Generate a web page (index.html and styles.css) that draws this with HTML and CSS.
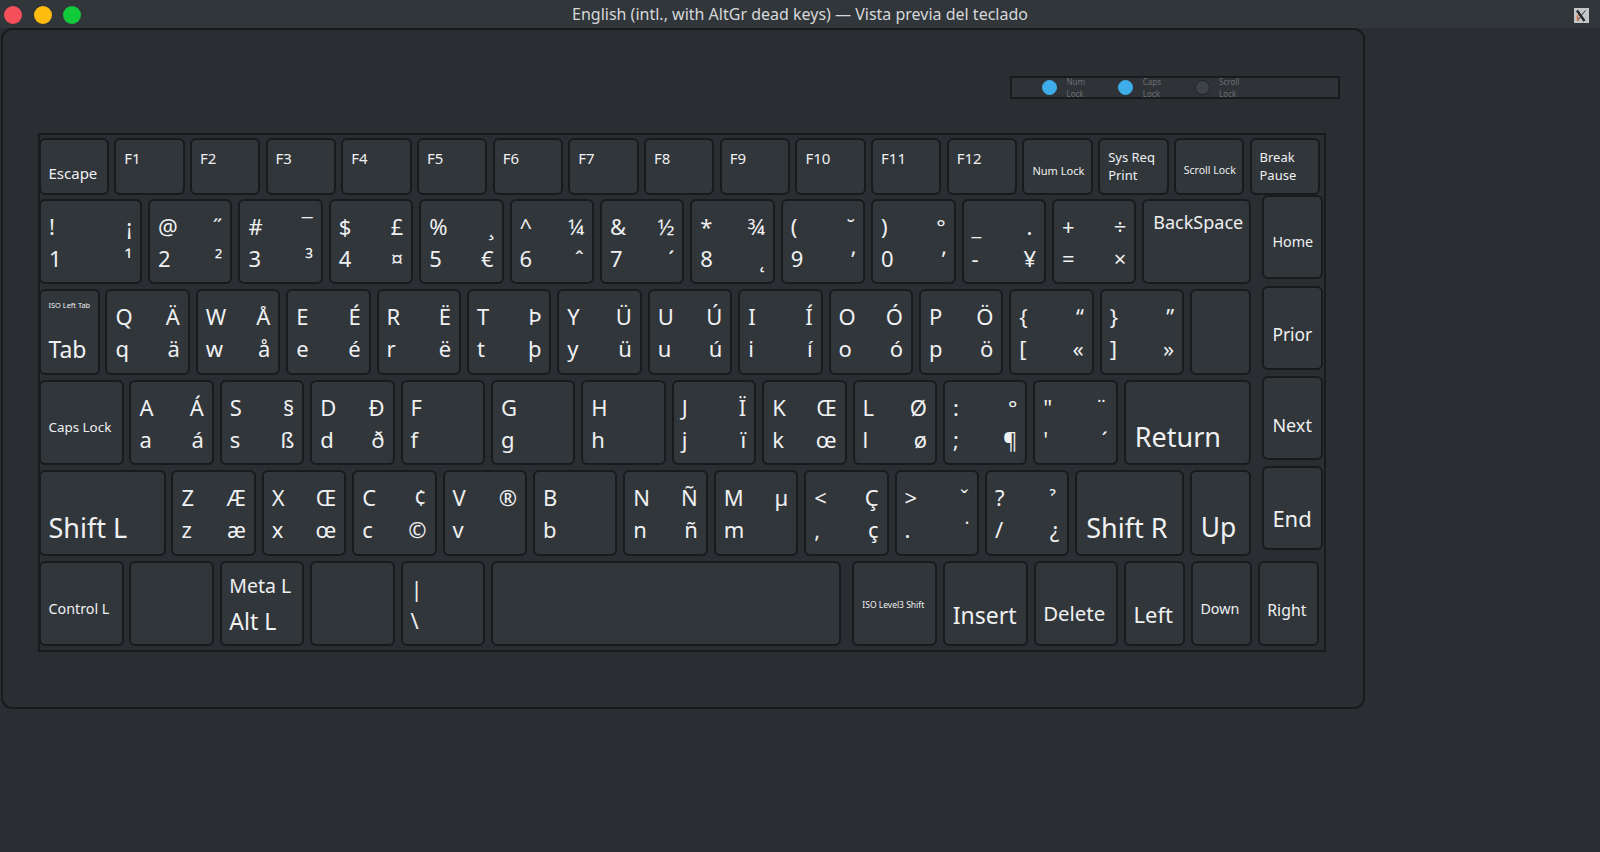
FILE: index.html
```html
<!DOCTYPE html>
<html lang="es">
<head>
<meta charset="utf-8">
<title>Vista previa del teclado</title>
<link rel="stylesheet" href="styles.css">
</head>
<body>
<header class="titlebar">
  <div class="lights"><span class="light red"></span><span class="light yellow"></span><span class="light green"></span></div>
  <div class="title">English (intl., with AltGr dead keys) — Vista previa del teclado</div>
  <svg class="xicon" viewBox="0 0 15 15" width="15" height="15" aria-hidden="true">
    <rect width="15" height="15" fill="#c3c7c8"/>
    <path d="M3 2.5 C5 5 7.500 9 10.500 13" fill="none" stroke="#26292b" stroke-width="2.600"/>
    <path d="M11.500 2.500 C9 5 6 9 3.500 12.500" fill="none" stroke="#26292b" stroke-width="1"/>
    <path d="M4.500 7 C2.500 9 2.500 11.500 5 12.500" fill="none" stroke="#e0703a" stroke-width="1.400"/>
  </svg>
</header>

<main class="frame">
  <section class="leds">
    <div class="led-item"><span class="led on"></span><span class="led-label">Num<br>Lock</span></div>
    <div class="led-item"><span class="led on"></span><span class="led-label">Caps<br>Lock</span></div>
    <div class="led-item"><span class="led"></span><span class="led-label">Scroll<br>Lock</span></div>
  </section>

  <section class="keyboard">
    <div class="keyboard-inner">
      <div class="row fn-row">
        <div class="key fn low-fn f15">Escape</div>
        <div class="key fn f15">F1</div>
        <div class="key fn f15">F2</div>
        <div class="key fn f15">F3</div>
        <div class="key fn f15">F4</div>
        <div class="key fn f15">F5</div>
        <div class="key fn f15">F6</div>
        <div class="key fn f15">F7</div>
        <div class="key fn f15">F8</div>
        <div class="key fn f15">F9</div>
        <div class="key fn f15">F10</div>
        <div class="key fn f15">F11</div>
        <div class="key fn f15">F12</div>
        <div class="key fn low-fn f11">Num Lock</div>
        <div class="key fn f13">Sys Req<br>Print</div>
        <div class="key fn low-fn f10">Scroll Lock</div>
        <div class="key fn f13">Break<br>Pause</div>
      </div>

      <div class="middle">
        <div class="rows">
          <div class="row">
            <div class="key legend w103"><span>!</span><span>¡</span><span>1</span><span>¹</span></div>
            <div class="key legend"><span>@</span><span>˝</span><span>2</span><span>²</span></div>
            <div class="key legend"><span>#</span><span>¯</span><span>3</span><span>³</span></div>
            <div class="key legend"><span>$</span><span>£</span><span>4</span><span>¤</span></div>
            <div class="key legend"><span>%</span><span>¸</span><span>5</span><span>€</span></div>
            <div class="key legend"><span>^</span><span>¼</span><span>6</span><span>ˆ</span></div>
            <div class="key legend"><span>&amp;</span><span>½</span><span>7</span><span>ˊ</span></div>
            <div class="key legend"><span>*</span><span>¾</span><span>8</span><span>˛</span></div>
            <div class="key legend"><span>(</span><span>˘</span><span>9</span><span>ʹ</span></div>
            <div class="key legend"><span>)</span><span>°</span><span>0</span><span>ʹ</span></div>
            <div class="key legend"><span>_</span><span>.&thinsp;</span><span>-</span><span>¥</span></div>
            <div class="key legend"><span>+</span><span>÷</span><span>=</span><span>×</span></div>
            <div class="key label w108 backspace f18">BackSpace</div>
          </div>

          <div class="row">
            <div class="key label w60 tabkey"><span class="iso-tab">ISO Left Tab</span><span class="tab-word">Tab</span></div>
            <div class="key legend"><span>Q</span><span>Ä</span><span>q</span><span>ä</span></div>
            <div class="key legend"><span>W</span><span>Å</span><span>w</span><span>å</span></div>
            <div class="key legend"><span>E</span><span>É</span><span>e</span><span>é</span></div>
            <div class="key legend"><span>R</span><span>Ë</span><span>r</span><span>ë</span></div>
            <div class="key legend"><span>T</span><span>Þ</span><span>t</span><span>þ</span></div>
            <div class="key legend"><span>Y</span><span>Ü</span><span>y</span><span>ü</span></div>
            <div class="key legend"><span>U</span><span>Ú</span><span>u</span><span>ú</span></div>
            <div class="key legend"><span>I</span><span>Í</span><span>i</span><span>í</span></div>
            <div class="key legend"><span>O</span><span>Ó</span><span>o</span><span>ó</span></div>
            <div class="key legend"><span>P</span><span>Ö</span><span>p</span><span>ö</span></div>
            <div class="key legend"><span>{</span><span>“</span><span>[</span><span>«</span></div>
            <div class="key legend"><span>}</span><span>”</span><span>]</span><span>»</span></div>
            <div class="key w61"></div>
          </div>

          <div class="row">
            <div class="key label low f13b">Caps Lock</div>
            <div class="key legend"><span>A</span><span>Á</span><span>a</span><span>á</span></div>
            <div class="key legend"><span>S</span><span>§</span><span>s</span><span>ß</span></div>
            <div class="key legend"><span>D</span><span>Ð</span><span>d</span><span>ð</span></div>
            <div class="key legend"><span>F</span><span></span><span>f</span><span></span></div>
            <div class="key legend"><span>G</span><span></span><span>g</span><span></span></div>
            <div class="key legend"><span>H</span><span></span><span>h</span><span></span></div>
            <div class="key legend"><span>J</span><span>Ï</span><span>j</span><span>ï</span></div>
            <div class="key legend"><span>K</span><span>Œ</span><span>k</span><span>œ</span></div>
            <div class="key legend"><span>L</span><span>Ø</span><span>l</span><span>ø</span></div>
            <div class="key legend"><span>:</span><span>°</span><span>;</span><span>¶</span></div>
            <div class="key legend"><span>"</span><span>¨</span><span>'</span><span>´</span></div>
            <div class="key label low wide-pad w127 f27">Return</div>
          </div>

          <div class="row">
            <div class="key label low w126 f27">Shift L</div>
            <div class="key legend"><span>Z</span><span>Æ</span><span>z</span><span>æ</span></div>
            <div class="key legend"><span>X</span><span>Œ</span><span>x</span><span>œ</span></div>
            <div class="key legend"><span>C</span><span>¢</span><span>c</span><span>©</span></div>
            <div class="key legend"><span>V</span><span>®</span><span>v</span><span></span></div>
            <div class="key legend"><span>B</span><span></span><span>b</span><span></span></div>
            <div class="key legend"><span>N</span><span>Ñ</span><span>n</span><span>ñ</span></div>
            <div class="key legend"><span>M</span><span>µ</span><span>m</span><span></span></div>
            <div class="key legend"><span>&lt;</span><span>Ç</span><span>,</span><span>ç</span></div>
            <div class="key legend"><span>&gt;</span><span>ˇ</span><span>.</span><span>˙</span></div>
            <div class="key legend"><span>?</span><span>ˀ&thinsp;</span><span>/</span><span>¿</span></div>
            <div class="key label low wide-pad w108 f27">Shift R</div>
            <div class="key label low wide-pad w61 f26">Up</div>
          </div>
        </div>

        <div class="nav-col">
          <div class="key nav f14">Home</div>
          <div class="key nav f17">Prior</div>
          <div class="key nav f18">Next</div>
          <div class="key nav f22">End</div>
        </div>
      </div>

      <div class="row">
        <div class="key label low f14">Control L</div>
        <div class="key"></div>
        <div class="key label metakey"><span class="meta-word">Meta L</span><span class="alt-word">Alt L</span></div>
        <div class="key"></div>
        <div class="key legend"><span>|</span><span></span><span>\</span><span></span></div>
        <div class="key space"></div>
        <div class="key label low level3 f8">ISO Level3 Shift</div>
        <div class="key label low f23">Insert</div>
        <div class="key label low f20">Delete</div>
        <div class="key label low w61 f22">Left</div>
        <div class="key label low w61 f14">Down</div>
        <div class="key label low w61 f16">Right</div>
      </div>
    </div>
  </section>
</main>
</body>
</html>
```
FILE: styles.css
```css
* { box-sizing: border-box; }

html, body {
  margin: 0;
  height: 100%;
}

body {
  width: 1600px;
  height: 852px;
  overflow: hidden;
  background: #2a2e32;
  color: #eff0f1;
  font-family: "Noto Sans", sans-serif;
}

/* title bar */
.titlebar {
  position: relative;
  display: flex;
  align-items: center;
  justify-content: center;
  height: 28px;
  background: #31363b;
}

.lights {
  position: absolute;
  left: 4px;
  top: 6px;
  display: flex;
  gap: 11.500px;
}

.light {
  width: 18px;
  height: 18px;
  border-radius: 50%;
}

.red { background: #f44f5b; }
.yellow { background: #fdbc0f; }
.green { background: #12cb3d; }

.title {
  font-size: 16px;
  line-height: 28px;
  color: #d6d8d9;
}

.xicon {
  position: absolute;
  left: 1574px;
  top: 7.500px;
}

/* window frame */
.frame {
  width: 1364px;
  height: 681px;
  margin-left: 1px;
  border: 2px solid #181a1c;
  border-radius: 11px;
  padding: 46px 0 0 35px;
}

/* LEDs */
.leds {
  display: flex;
  width: 330px;
  height: 23px;
  margin-left: 972px;
  padding-left: 30px;
  background: #2f3338;
  border: 2px solid #181a1c;
}

.led-item {
  display: flex;
  align-items: center;
  width: 76.300px;
  flex: none;
}

.led {
  width: 15px;
  height: 15px;
  border-radius: 50%;
  background: #3e4348;
  border: 1px solid #1f2225;
  flex: none;
}

.led.on {
  background: #3daee9;
  border-color: #3daee9;
}

.led-label {
  margin-left: 9.500px;
  font-size: 8px;
  line-height: 11.300px;
  color: #6b6f72;
}

/* keyboard */
.keyboard {
  width: 1288px;
  height: 519px;
  margin-top: 34px;
  border: 2px solid #181a1c;
  padding-top: 2.500px;
}

.keyboard-inner {
  margin-left: -1px;
}

.row {
  display: flex;
  gap: 5.900px;
}

.fn-row {
  gap: 5.300px;
  margin-left: -0.500px;
  margin-bottom: 4.300px;
}

.middle {
  display: flex;
  gap: 10.400px;
  margin-bottom: 5.100px;
}

.rows {
  display: flex;
  flex-direction: column;
  gap: 5.100px;
  width: 1213px;
  flex: none;
}

.nav-col {
  display: flex;
  flex-direction: column;
  gap: 6.400px;
  margin-top: -3.900px;
}

.key {
  flex: none;
  width: 84.500px;
  height: 85.300px;
  background: #31363b;
  border: 2px solid #181a1c;
  border-radius: 6px;
  white-space: nowrap;
}

.fn {
  width: 70.400px;
  height: 57.300px;
  padding: 8px 0 0 8px;
}

.low-fn { padding-top: 23.500px; }

.nav {
  width: 60.800px;
  height: 84px;
  padding: 34.600px 0 0 8px;
}

.legend {
  display: grid;
  grid-template-columns: 1fr auto;
  grid-auto-rows: 32px;
  padding: 8.900px 8px 0 8px;
  font-size: 22px;
  line-height: 32px;
}

.legend span:nth-child(even) { justify-self: end; }

.label {
  padding: 0 0 0 7.500px;
}

.low { padding-top: 36.400px; }

.wide-pad { padding-left: 9px; }

.backspace {
  padding-top: 9px;
  padding-left: 9px;
}

.tabkey span, .metakey span { display: block; }

.iso-tab {
  padding-top: 8.100px;
  font-size: 7.400px;
}

.tab-word {
  margin-top: 23.400px;
  font-size: 23px;
}

.metakey { padding-top: 9.400px; }

.meta-word { font-size: 19.500px; }

.alt-word {
  margin-top: 5.600px;
  font-size: 23px;
}

.w60 { width: 60.500px; }
.w61 { width: 61px; }
.w103 { width: 103.100px; }
.w108 { width: 108.500px; }
.w126 { width: 126.500px; }
.w127 { width: 127px; }

.space { width: 350px; }

.level3 {
  width: 85.500px;
  margin-left: 5px;
  padding-left: 8.500px;
}

.f8 { font-size: 8.500px; }
.f10 { font-size: 10.500px; }
.f11 { font-size: 11px; }
.f13 { font-size: 13px; }
.f13b { font-size: 13.400px; }
.f14 { font-size: 14.300px; }
.f15 { font-size: 15px; }
.f16 { font-size: 15.800px; }
.f17 { font-size: 17.400px; }
.f18 { font-size: 18px; }
.f20 { font-size: 20.400px; }
.f22 { font-size: 22px; }
.f23 { font-size: 23px; }
.f26 { font-size: 26.400px; }
.f27 { font-size: 27px; }
```
